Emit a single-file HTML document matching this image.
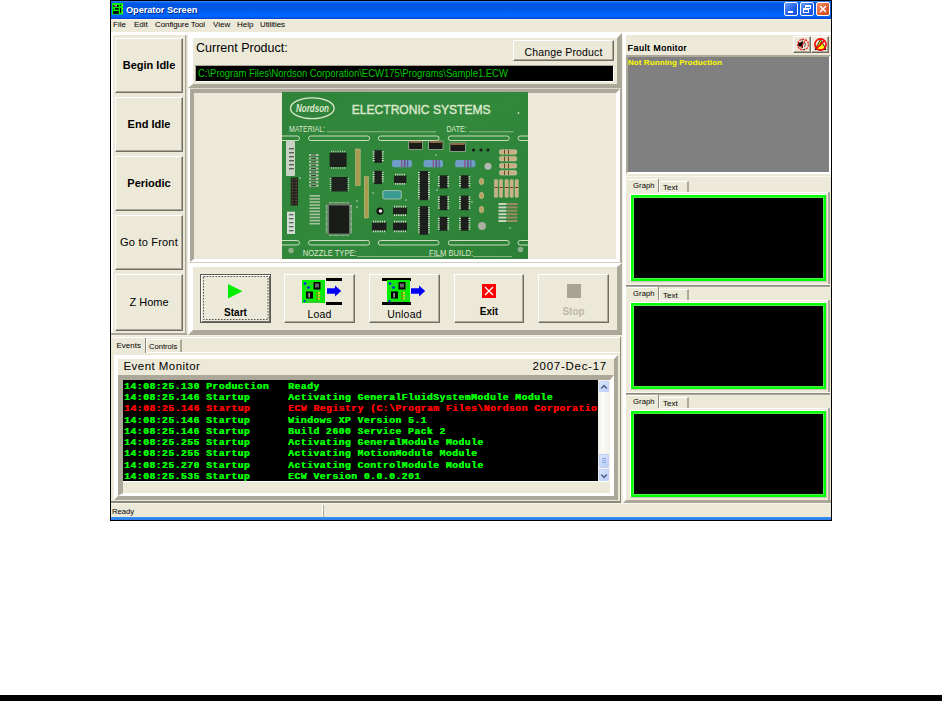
<!DOCTYPE html>
<html><head><meta charset="utf-8">
<style>
*{margin:0;padding:0;box-sizing:border-box}
html,body{width:942px;height:701px;background:#fff;overflow:hidden;position:relative;font-family:"Liberation Sans",sans-serif}
.a{position:absolute}
.bg{background:#ece9d8}
.t{position:absolute;white-space:pre;line-height:1}
.btn{position:absolute;background:#ece9d8;border-top:1px solid #fff;border-left:1px solid #fff;border-right:1px solid #716f64;border-bottom:1px solid #716f64;box-shadow:inset -1px -1px 0 #aca899}
.mono{font-family:"Liberation Mono",monospace;font-weight:bold}
</style></head><body>

<!-- bottom black bar -->
<div class="a" style="left:0;top:695px;width:942px;height:6px;background:#000"></div>

<!-- window frame -->
<div class="a" style="left:110px;top:0;width:722px;height:521px;background:#000"></div>
<div class="a bg" style="left:111px;top:1px;width:720px;height:519px"></div>
<!-- title bar -->
<div class="a" style="left:111px;top:1px;width:720px;height:18px;background:linear-gradient(#3a8cff 0px,#1a6cf5 1px,#0058e6 2px,#0055e0 6px,#005cec 10px,#0066ff 13px,#0063fb 16px,#0050e8 17px,#0040cc 18px)"></div>
<!-- icon -->
<svg class="a" style="left:112px;top:3px" width="12" height="12" viewBox="0 0 12 12">
<rect x="0" y="0" width="11" height="11.5" fill="#00f000"/>
<rect x="1.2" y="1.9" width="5.6" height="2" rx="0.5" fill="#000"/><rect x="2.2" y="2.4" width="2.8" height="0.9" fill="#fff"/>
<rect x="3" y="5" width="3.8" height="1.7" fill="#000"/><circle cx="1.5" cy="6.5" r="0.6" fill="#000"/>
<rect x="1.2" y="8" width="5.6" height="2.8" fill="#000"/>
<rect x="8" y="4.9" width="1.1" height="4.9" fill="#000"/><circle cx="8.5" cy="2.3" r="0.7" fill="#000"/>
<circle cx="10.5" cy="2.4" r="0.6" fill="#f0f000"/><circle cx="10.5" cy="5.5" r="0.6" fill="#f0f000"/><circle cx="10.5" cy="9.4" r="0.6" fill="#f0f000"/>
</svg>
<div class="t" style="left:126px;top:5.5px;font-size:9.2px;font-weight:bold;color:#fff;letter-spacing:-0.05px;text-shadow:1px 1px 0 #0a2a8a">Operator Screen</div>
<!-- window buttons -->
<div class="a" style="left:784px;top:2px;width:14px;height:14px;border:1px solid #fff;border-radius:2px;background:linear-gradient(135deg,#6aa0ff,#1f5ee8 60%,#1a50d8)">
  <div class="a" style="left:3px;top:8px;width:5px;height:2px;background:#fff"></div>
</div>
<div class="a" style="left:800px;top:2px;width:14px;height:14px;border:1px solid #fff;border-radius:2px;background:linear-gradient(135deg,#6aa0ff,#1f5ee8 60%,#1a50d8)">
  <div class="a" style="left:4px;top:2px;width:6px;height:4px;border:1px solid #fff;border-top-width:2px"></div>
  <div class="a" style="left:2px;top:5px;width:6px;height:5px;border:1px solid #fff;border-top-width:2px;background:#2a66ea"></div>
</div>
<div class="a" style="left:816px;top:2px;width:14px;height:14px;border:1px solid #fff;border-radius:2px;background:linear-gradient(135deg,#f0906a,#e05a30 60%,#c84a20)">
  <svg class="a" style="left:0;top:0" width="12" height="12"><path d="M3 3 L9 9 M9 3 L3 9" stroke="#fff" stroke-width="1.6"/></svg>
</div>

<!-- menu -->
<div class="a" style="left:111px;top:19px;width:720px;height:1px;background:#f8f4e2"></div>
<div class="t" style="left:113px;top:21px;font-size:8px;color:#000">File</div>
<div class="t" style="left:134px;top:21px;font-size:8px;color:#000">Edit</div>
<div class="t" style="left:155px;top:21px;font-size:8px;color:#000;letter-spacing:-0.1px">Configure Tool</div>
<div class="t" style="left:213px;top:21px;font-size:8px;color:#000">View</div>
<div class="t" style="left:237px;top:21px;font-size:8px;color:#000">Help</div>
<div class="t" style="left:260px;top:21px;font-size:8px;color:#000;letter-spacing:-0.1px">Utilities</div>

<!-- client top white line -->
<div class="a" style="left:111px;top:32px;width:720px;height:3px;background:#fff"></div>
<div class="a" style="left:111px;top:32px;width:2px;height:305px;background:#fff"></div>

<!-- LEFT COLUMN -->
<div class="a" style="left:185px;top:35px;width:1px;height:300px;background:#aca899"></div>
<div class="a" style="left:186px;top:35px;width:1px;height:300px;background:#d8d4c4"></div>
<div class="a" style="left:111px;top:333px;width:76px;height:2px;background:#aca899"></div>
<div class="a" style="left:111px;top:335px;width:510px;height:1px;background:#f4f1e4"></div>
<div class="btn" style="left:115px;top:38px;width:68px;height:55px"><div class="t" style="left:0;width:66px;text-align:center;top:20.6px;font-size:11px;font-weight:bold;color:#000">Begin Idle</div></div>
<div class="btn" style="left:115px;top:97px;width:68px;height:55px"><div class="t" style="left:0;width:66px;text-align:center;top:20.6px;font-size:11px;font-weight:bold;color:#000">End Idle</div></div>
<div class="btn" style="left:115px;top:156px;width:68px;height:55px"><div class="t" style="left:0;width:66px;text-align:center;top:20.6px;font-size:11px;font-weight:bold;color:#000">Periodic</div></div>
<div class="btn" style="left:115px;top:215px;width:68px;height:55px"><div class="t" style="left:0;width:66px;text-align:center;top:21px;font-size:11px;letter-spacing:0.2px;color:#000">Go to Front</div></div>
<div class="btn" style="left:115px;top:274px;width:68px;height:57px"><div class="t" style="left:0;width:66px;text-align:center;top:22px;font-size:11px;color:#000">Z Home</div></div>


<!-- MIDDLE -->
<!-- product panel -->
<div class="a" style="left:188px;top:33px;width:434px;height:55px;background:#ece9d8;border-style:solid;border-width:5px 5px 4px 5px;border-color:#fff #aca899 #aca899 #fff"></div>
<div class="t" style="left:196px;top:42px;font-size:12.5px;color:#000">Current Product:</div>
<div class="btn" style="left:513px;top:40px;width:101px;height:21px"><div class="t" style="left:0;width:99px;text-align:center;top:6px;font-size:10.5px;color:#000;letter-spacing:0.15px">Change Product</div></div>
<div class="a" style="left:195px;top:65px;width:419px;height:17px;background:#000;border-top:1px solid #aca899;border-left:1px solid #aca899;border-bottom:1px solid #fff;border-right:1px solid #fff"></div>
<div class="t" style="left:198px;top:68px;font-size:10.6px;color:#00c800;transform:scaleX(0.892);transform-origin:0 0">C:\Program Files\Nordson Corporation\ECW175\Programs\Sample1.ECW</div>
<!-- image panel -->
<div class="a" style="left:188px;top:88px;width:434px;height:175px;background:#ece9d8;border-style:solid;border-width:1px 2px 1px 2px;border-color:#dcd9cc #aca899 #d0cdc0 #fff"></div>
<div class="a" style="left:190px;top:89px;width:430px;height:173px;border-style:solid;border-width:4px 4px 3px 4px;border-color:#aca899 #fff #fff #aca899"></div>
<svg class="a" style="left:282px;top:92px" width="246" height="167" viewBox="282 92 246 167">
<defs><linearGradient id="pg" x1="0" y1="0" x2="1" y2="1"><stop offset="0" stop-color="#2f843a"/><stop offset="0.5" stop-color="#31883b"/><stop offset="1" stop-color="#2c8037"/></linearGradient></defs>
<rect x="282" y="92" width="246" height="167" fill="url(#pg)"/>
<ellipse cx="312.3" cy="108.2" rx="21.8" ry="10.4" fill="none" stroke="#dce8cc" stroke-width="1.3"/>
<text x="312.5" y="112" font-family="Liberation Sans" font-style="italic" font-weight="bold" font-size="10.5" fill="#dce8cc" text-anchor="middle" textLength="33" lengthAdjust="spacingAndGlyphs">Nordson</text>
<text x="351.7" y="113.9" font-family="Liberation Sans" font-size="13.4" fill="#dce8cc" stroke="#dce8cc" stroke-width="0.45" textLength="139" lengthAdjust="spacingAndGlyphs">ELECTRONIC SYSTEMS</text>
<text x="289" y="131.8" font-family="Liberation Sans" font-size="8.2" fill="#dce8cc" textLength="36" lengthAdjust="spacingAndGlyphs">MATERIAL:</text>
<text x="446.5" y="131.8" font-family="Liberation Sans" font-size="8.2" fill="#dce8cc" textLength="20" lengthAdjust="spacingAndGlyphs">DATE:</text>
<path d="M327 131.8 H436 M469 131.8 H513.6 M357 256.6 H443 M473 256.6 H512" stroke="#dce8cc" stroke-width="0.7" opacity="0.8"/>
<text x="302.7" y="256.2" font-family="Liberation Sans" font-size="8.6" fill="#dce8cc" textLength="54" lengthAdjust="spacingAndGlyphs">NOZZLE TYPE:</text>
<text x="429" y="256.2" font-family="Liberation Sans" font-size="8.6" fill="#dce8cc" textLength="44" lengthAdjust="spacingAndGlyphs">FILM BUILD:</text>
<rect x="276" y="136" width="23.5" height="4.5" rx="2.25" fill="none" stroke="#dce8cc" stroke-width="0.9"/>
<rect x="308.5" y="136" width="61.19999999999999" height="4.5" rx="2.25" fill="none" stroke="#dce8cc" stroke-width="0.9"/>
<rect x="378.3" y="136" width="60.69999999999999" height="4.5" rx="2.25" fill="none" stroke="#dce8cc" stroke-width="0.9"/>
<rect x="448.3" y="136" width="61.0" height="4.5" rx="2.25" fill="none" stroke="#dce8cc" stroke-width="0.9"/>
<rect x="518" y="136" width="16" height="4.5" rx="2.25" fill="none" stroke="#dce8cc" stroke-width="0.9"/>
<rect x="276" y="240.5" width="23.5" height="4.5" rx="2.25" fill="none" stroke="#dce8cc" stroke-width="0.9"/>
<rect x="308.5" y="240.5" width="61.19999999999999" height="4.5" rx="2.25" fill="none" stroke="#dce8cc" stroke-width="0.9"/>
<rect x="378.3" y="240.5" width="60.69999999999999" height="4.5" rx="2.25" fill="none" stroke="#dce8cc" stroke-width="0.9"/>
<rect x="448.3" y="240.5" width="61.0" height="4.5" rx="2.25" fill="none" stroke="#dce8cc" stroke-width="0.9"/>
<rect x="518" y="240.5" width="16" height="4.5" rx="2.25" fill="none" stroke="#dce8cc" stroke-width="0.9"/>
<circle cx="291" cy="250.5" r="2.7" fill="#8cb088"/><circle cx="520.5" cy="249.5" r="2.8" fill="#8cb088"/>
<rect x="286" y="141" width="9" height="35" rx="1" fill="#c9d3c3"/>
<rect x="289" y="148" width="5" height="1.4" fill="#55605a"/>
<rect x="289" y="152" width="5" height="1.4" fill="#55605a"/>
<rect x="289" y="156" width="5" height="1.4" fill="#55605a"/>
<rect x="289" y="160" width="5" height="1.4" fill="#55605a"/>
<rect x="289" y="164" width="5" height="1.4" fill="#55605a"/>
<rect x="289" y="168" width="5" height="1.4" fill="#55605a"/>
<rect x="287" y="211.7" width="8" height="22.3" fill="#d3ddd3"/>
<rect x="289" y="214" width="4.5" height="1.3" fill="#5a665e"/>
<rect x="289" y="218" width="4.5" height="1.3" fill="#5a665e"/>
<rect x="289" y="222" width="4.5" height="1.3" fill="#5a665e"/>
<rect x="289" y="226" width="4.5" height="1.3" fill="#5a665e"/>
<rect x="289" y="230" width="4.5" height="1.3" fill="#5a665e"/>
<rect x="290.7" y="177.6" width="7.3" height="28" fill="#26261e"/>
<rect x="291.8" y="179" width="1.4" height="1.2" fill="#6a5040"/><rect x="295.5" y="179" width="1.4" height="1.2" fill="#6a5040"/>
<rect x="291.8" y="182" width="1.4" height="1.2" fill="#6a5040"/><rect x="295.5" y="182" width="1.4" height="1.2" fill="#6a5040"/>
<rect x="291.8" y="185" width="1.4" height="1.2" fill="#6a5040"/><rect x="295.5" y="185" width="1.4" height="1.2" fill="#6a5040"/>
<rect x="291.8" y="188" width="1.4" height="1.2" fill="#6a5040"/><rect x="295.5" y="188" width="1.4" height="1.2" fill="#6a5040"/>
<rect x="291.8" y="191" width="1.4" height="1.2" fill="#6a5040"/><rect x="295.5" y="191" width="1.4" height="1.2" fill="#6a5040"/>
<rect x="291.8" y="194" width="1.4" height="1.2" fill="#6a5040"/><rect x="295.5" y="194" width="1.4" height="1.2" fill="#6a5040"/>
<rect x="291.8" y="197" width="1.4" height="1.2" fill="#6a5040"/><rect x="295.5" y="197" width="1.4" height="1.2" fill="#6a5040"/>
<rect x="291.8" y="200" width="1.4" height="1.2" fill="#6a5040"/><rect x="295.5" y="200" width="1.4" height="1.2" fill="#6a5040"/>
<rect x="291.8" y="203" width="1.4" height="1.2" fill="#6a5040"/><rect x="295.5" y="203" width="1.4" height="1.2" fill="#6a5040"/>
<rect x="309.2" y="154.0" width="9.3" height="2" fill="#b8c8b0"/><rect x="311" y="154.5" width="5" height="1" fill="#2a3a2a"/>
<rect x="309.2" y="157.4" width="9.3" height="2" fill="#b8c8b0"/><rect x="311" y="157.9" width="5" height="1" fill="#2a3a2a"/>
<rect x="309.2" y="160.8" width="9.3" height="2" fill="#b8c8b0"/><rect x="311" y="161.3" width="5" height="1" fill="#2a3a2a"/>
<rect x="309.2" y="164.2" width="9.3" height="2" fill="#b8c8b0"/><rect x="311" y="164.7" width="5" height="1" fill="#2a3a2a"/>
<rect x="309.2" y="167.6" width="9.3" height="2" fill="#b8c8b0"/><rect x="311" y="168.1" width="5" height="1" fill="#2a3a2a"/>
<rect x="309.2" y="171.0" width="9.3" height="2" fill="#b8c8b0"/><rect x="311" y="171.5" width="5" height="1" fill="#2a3a2a"/>
<rect x="309.2" y="174.4" width="9.3" height="2" fill="#b8c8b0"/><rect x="311" y="174.9" width="5" height="1" fill="#2a3a2a"/>
<rect x="309.2" y="177.8" width="9.3" height="2" fill="#b8c8b0"/><rect x="311" y="178.3" width="5" height="1" fill="#2a3a2a"/>
<rect x="309.2" y="181.2" width="9.3" height="2" fill="#b8c8b0"/><rect x="311" y="181.7" width="5" height="1" fill="#2a3a2a"/>
<rect x="309.2" y="184.6" width="9.3" height="2" fill="#b8c8b0"/><rect x="311" y="185.1" width="5" height="1" fill="#2a3a2a"/>
<rect x="309.5" y="195.0" width="10.5" height="1.6" fill="#a8c0a0"/>
<rect x="309.5" y="198.1" width="10.5" height="1.6" fill="#a8c0a0"/>
<rect x="309.5" y="201.2" width="10.5" height="1.6" fill="#a8c0a0"/>
<rect x="309.5" y="204.3" width="10.5" height="1.6" fill="#a8c0a0"/>
<rect x="309.5" y="207.4" width="10.5" height="1.6" fill="#a8c0a0"/>
<rect x="309.5" y="210.5" width="10.5" height="1.6" fill="#a8c0a0"/>
<rect x="309.5" y="213.6" width="10.5" height="1.6" fill="#a8c0a0"/>
<rect x="309.5" y="216.7" width="10.5" height="1.6" fill="#a8c0a0"/>
<rect x="309.5" y="219.8" width="10.5" height="1.6" fill="#a8c0a0"/>
<rect x="309.5" y="222.9" width="10.5" height="1.6" fill="#a8c0a0"/>
<rect x="329.6" y="152.6" width="17" height="14.4" fill="#1c201c"/>
<path d="M331 151.5 H345.5 M331 168 H345.5" stroke="#c8d0c0" stroke-width="1.4" stroke-dasharray="1 1.2"/>
<rect x="331.5" y="177" width="16" height="14.5" fill="#1e221e"/>
<path d="M330.5 178 V190.5 M348.5 178 V190.5" stroke="#c8d0c0" stroke-width="1.3" stroke-dasharray="1 1"/>
<rect x="327.5" y="203.5" width="23" height="31" fill="#6a7a68"/><path d="M326.6 205 V233.5 M351.2 205 V233.5" stroke="#b8c4b0" stroke-width="1.6" stroke-dasharray="0.7 0.5"/><path d="M329 202.6 H349 M329 235.4 H349" stroke="#b8c4b0" stroke-width="1.4" stroke-dasharray="0.7 0.5"/><rect x="329" y="205.5" width="20" height="28" fill="#1a1c1a"/>
<rect x="355.5" y="149" width="4.7" height="36.5" fill="#a89c50" stroke="#d0c890" stroke-width="0.5"/>
<rect x="364.3" y="176.7" width="4.1" height="41.3" fill="#a89c50" stroke="#d0c890" stroke-width="0.5"/>
<rect x="374.2" y="150.3" width="7.900000000000011" height="12.5" fill="#1c1f1c"/><path d="M373.6 151.3 V161.8 M382.7 151.3 V161.8" stroke="#dde4d4" stroke-width="1.8" stroke-dasharray="1.1 1.1"/>
<rect x="374.2" y="170.7" width="7.900000000000011" height="13.400000000000006" fill="#1c1f1c"/><path d="M373.6 171.7 V183.1 M382.7 171.7 V183.1" stroke="#dde4d4" stroke-width="1.8" stroke-dasharray="1.1 1.1"/>
<rect x="439.4" y="175.3" width="8.200000000000022" height="13.099999999999994" fill="#1c1f1c"/><path d="M438.8 176.3 V187.4 M448.2 176.3 V187.4" stroke="#dde4d4" stroke-width="1.8" stroke-dasharray="1.1 1.1"/>
<rect x="439.4" y="195.6" width="8.200000000000022" height="14.599999999999994" fill="#1c1f1c"/><path d="M438.8 196.6 V209.2 M448.2 196.6 V209.2" stroke="#dde4d4" stroke-width="1.8" stroke-dasharray="1.1 1.1"/>
<rect x="439.4" y="216.8" width="8.200000000000022" height="13.899999999999977" fill="#1c1f1c"/><path d="M438.8 217.8 V229.7 M448.2 217.8 V229.7" stroke="#dde4d4" stroke-width="1.8" stroke-dasharray="1.1 1.1"/>
<rect x="460.59999999999997" y="175.3" width="8.200000000000022" height="13.099999999999994" fill="#1c1f1c"/><path d="M460.0 176.3 V187.4 M469.4 176.3 V187.4" stroke="#dde4d4" stroke-width="1.8" stroke-dasharray="1.1 1.1"/>
<rect x="460.59999999999997" y="195.6" width="8.200000000000022" height="14.599999999999994" fill="#1c1f1c"/><path d="M460.0 196.6 V209.2 M469.4 196.6 V209.2" stroke="#dde4d4" stroke-width="1.8" stroke-dasharray="1.1 1.1"/>
<rect x="460.59999999999997" y="216.8" width="8.200000000000022" height="13.899999999999977" fill="#1c1f1c"/><path d="M460.0 217.8 V229.7 M469.4 217.8 V229.7" stroke="#dde4d4" stroke-width="1.8" stroke-dasharray="1.1 1.1"/>
<rect x="394" y="175.5" width="12.399999999999977" height="7.599999999999994" fill="#1c1f1c"/><path d="M395 174.7 H405.4 M395 183.9 H405.4" stroke="#dde4d4" stroke-width="1.8" stroke-dasharray="1.1 1.1"/>
<rect x="393" y="207.5" width="14" height="6.900000000000006" fill="#1c1f1c"/><path d="M394 206.7 H406 M394 215.20000000000002 H406" stroke="#dde4d4" stroke-width="1.8" stroke-dasharray="1.1 1.1"/>
<rect x="372" y="222.5" width="14.5" height="8" fill="#1c1f1c"/><path d="M373 221.7 H385.5 M373 231.3 H385.5" stroke="#dde4d4" stroke-width="1.8" stroke-dasharray="1.1 1.1"/>
<rect x="393" y="222.5" width="14" height="8" fill="#1c1f1c"/><path d="M394 221.7 H406 M394 231.3 H406" stroke="#dde4d4" stroke-width="1.8" stroke-dasharray="1.1 1.1"/>
<rect x="419.5" y="171" width="8.799999999999988" height="29.19999999999999" fill="#1c1f1c"/><path d="M418.90000000000003 172 V199.2 M428.9 172 V199.2" stroke="#dde4d4" stroke-width="1.8" stroke-dasharray="1.1 1.1"/>
<rect x="419.5" y="206.2" width="8.799999999999988" height="28.5" fill="#1c1f1c"/><path d="M418.90000000000003 207.2 V233.7 M428.9 207.2 V233.7" stroke="#dde4d4" stroke-width="1.8" stroke-dasharray="1.1 1.1"/>
<rect x="392" y="160" width="20" height="7.3" rx="2" fill="#6f9dc6"/>
<rect x="401" y="160" width="1.5" height="7.3" fill="#8a5a8a"/><rect x="404" y="160" width="1.5" height="7.3" fill="#6a4a7a"/><rect x="407" y="160" width="1.2" height="7.3" fill="#5a5a8a"/>
<rect x="423.6" y="160" width="19.399999999999977" height="7.3" rx="2" fill="#6f9dc6"/>
<rect x="432.6" y="160" width="1.5" height="7.3" fill="#8a5a8a"/><rect x="435.6" y="160" width="1.5" height="7.3" fill="#6a4a7a"/><rect x="438.6" y="160" width="1.2" height="7.3" fill="#5a5a8a"/>
<rect x="455.2" y="160" width="20.100000000000023" height="7.3" rx="2" fill="#6f9dc6"/>
<rect x="464.2" y="160" width="1.5" height="7.3" fill="#8a5a8a"/><rect x="467.2" y="160" width="1.5" height="7.3" fill="#6a4a7a"/><rect x="470.2" y="160" width="1.2" height="7.3" fill="#5a5a8a"/>
<rect x="408.8" y="141" width="13.899999999999977" height="8.5" fill="#1a1a16" stroke="#c8d0c0" stroke-width="0.6"/><rect x="409.8" y="141" width="11.899999999999977" height="2" fill="#8a6a40"/>
<rect x="428.7" y="141" width="14.300000000000011" height="8.5" fill="#1a1a16" stroke="#c8d0c0" stroke-width="0.6"/><rect x="429.7" y="141" width="12.300000000000011" height="2" fill="#8a6a40"/>
<rect x="450" y="143" width="15.300000000000011" height="8.5" fill="#1a1a16" stroke="#c8d0c0" stroke-width="0.6"/><rect x="451" y="143" width="13.300000000000011" height="2" fill="#8a6a40"/>
<rect x="382.8" y="190.6" width="18.5" height="8.4" rx="1.5" fill="#3a9a90" stroke="#c8d8c8" stroke-width="0.7"/>
<circle cx="380" cy="211.2" r="3.6" fill="#141414"/><circle cx="380.5" cy="211" r="1.8" fill="#e8e8e0"/>
<ellipse cx="481.5" cy="181.5" rx="2.2" ry="3.3" fill="#b8a060" stroke="#d8d0a8" stroke-width="0.5"/>
<ellipse cx="481.5" cy="195.5" rx="2.2" ry="3.3" fill="#b8a060" stroke="#d8d0a8" stroke-width="0.5"/>
<ellipse cx="481.5" cy="209.5" rx="2.2" ry="3.3" fill="#b8a060" stroke="#d8d0a8" stroke-width="0.5"/>
<circle cx="488" cy="166.3" r="3.5" fill="#b0b8b0"/>
<circle cx="482" cy="226" r="4" fill="#a8b0a0"/>
<rect x="499.5" y="149.7" width="17.2" height="4.6" rx="1.5" fill="#c8b080" stroke="#d8d8c0" stroke-width="0.5"/><rect x="504" y="149.7" width="1" height="4.6" fill="#6a4a2a"/><rect x="508" y="149.7" width="1" height="4.6" fill="#6a4a2a"/>
<rect x="499.5" y="156.39999999999998" width="17.2" height="4.6" rx="1.5" fill="#c8b080" stroke="#d8d8c0" stroke-width="0.5"/><rect x="504" y="156.39999999999998" width="1" height="4.6" fill="#6a4a2a"/><rect x="508" y="156.39999999999998" width="1" height="4.6" fill="#6a4a2a"/>
<rect x="499.5" y="163.5" width="17.2" height="4.6" rx="1.5" fill="#c8b080" stroke="#d8d8c0" stroke-width="0.5"/><rect x="504" y="163.5" width="1" height="4.6" fill="#6a4a2a"/><rect x="508" y="163.5" width="1" height="4.6" fill="#6a4a2a"/>
<rect x="499.5" y="170.5" width="17.2" height="4.6" rx="1.5" fill="#c8b080" stroke="#d8d8c0" stroke-width="0.5"/><rect x="504" y="170.5" width="1" height="4.6" fill="#6a4a2a"/><rect x="508" y="170.5" width="1" height="4.6" fill="#6a4a2a"/>
<rect x="494.3" y="179.4" width="3.4" height="18" rx="1" fill="#c8b080" stroke="#d0d0b0" stroke-width="0.4"/><rect x="494.3" y="187" width="3.4" height="1" fill="#7a3a20"/>
<rect x="499.3" y="179.4" width="3.4" height="18" rx="1" fill="#c8b080" stroke="#d0d0b0" stroke-width="0.4"/><rect x="499.3" y="187" width="3.4" height="1" fill="#7a3a20"/>
<rect x="504.90000000000003" y="179.4" width="3.4" height="18" rx="1" fill="#c8b080" stroke="#d0d0b0" stroke-width="0.4"/><rect x="504.90000000000003" y="187" width="3.4" height="1" fill="#7a3a20"/>
<rect x="509.90000000000003" y="179.4" width="3.4" height="18" rx="1" fill="#c8b080" stroke="#d0d0b0" stroke-width="0.4"/><rect x="509.90000000000003" y="187" width="3.4" height="1" fill="#7a3a20"/>
<rect x="515.0" y="179.4" width="3.4" height="18" rx="1" fill="#c8b080" stroke="#d0d0b0" stroke-width="0.4"/><rect x="515.0" y="187" width="3.4" height="1" fill="#7a3a20"/>
<rect x="498.5" y="203.0" width="8" height="2" fill="#c8d4c0"/><rect x="507" y="203.0" width="10.5" height="2" fill="#9a8a60"/>
<rect x="498.5" y="206.4" width="8" height="2" fill="#c8d4c0"/><rect x="507" y="206.4" width="10.5" height="2" fill="#9a8a60"/>
<rect x="498.5" y="209.8" width="8" height="2" fill="#c8d4c0"/><rect x="507" y="209.8" width="10.5" height="2" fill="#9a8a60"/>
<rect x="498.5" y="213.2" width="8" height="2" fill="#c8d4c0"/><rect x="507" y="213.2" width="10.5" height="2" fill="#9a8a60"/>
<rect x="498.5" y="216.6" width="8" height="2" fill="#c8d4c0"/><rect x="507" y="216.6" width="10.5" height="2" fill="#9a8a60"/>
<rect x="498.5" y="220.0" width="8" height="2" fill="#c8d4c0"/><rect x="507" y="220.0" width="10.5" height="2" fill="#9a8a60"/>
<circle cx="473.5" cy="150" r="1.6" fill="#1a1a1a"/>
<circle cx="481" cy="150" r="1.6" fill="#1a1a1a"/>
<circle cx="488" cy="150" r="1.6" fill="#1a1a1a"/>
<circle cx="357" cy="201" r="0.8" fill="#c8d8c0"/>
<circle cx="357" cy="207" r="0.8" fill="#c8d8c0"/>
<circle cx="373" cy="193" r="0.8" fill="#c8d8c0"/>
<circle cx="406" cy="200" r="0.8" fill="#c8d8c0"/>
<circle cx="436" cy="155" r="0.8" fill="#c8d8c0"/>
<circle cx="472" cy="202" r="0.8" fill="#c8d8c0"/>
<circle cx="510" cy="228" r="0.8" fill="#c8d8c0"/>
<circle cx="518.5" cy="113" r="0.9" fill="#c8d8c0"/>
<circle cx="437" cy="190" r="0.8" fill="#c8d8c0"/>
<circle cx="300" cy="178" r="0.8" fill="#c8d8c0"/>
</svg>
<!-- buttons panel -->
<div class="a" style="left:188px;top:263px;width:434px;height:72px;background:#ece9d8;border-style:solid;border-width:4px 5px 5px 5px;border-color:#fff #aca899 #aca899 #fff"></div>


<!-- RIGHT COLUMN -->
<div class="a" style="left:622px;top:35px;width:1px;height:469px;background:#f4f2e6"></div>
<div class="a" style="left:623px;top:33px;width:3px;height:471px;background:#fff"></div>
<div class="t" style="left:627.5px;top:44px;font-size:8.8px;color:#000;letter-spacing:0.62px;text-shadow:0.3px 0 0 #000">Fault Monitor</div>
<div class="btn" style="left:793px;top:36px;width:18px;height:17px"></div>
<div class="btn" style="left:811px;top:36px;width:18px;height:17px"></div>
<svg class="a" style="left:796px;top:38px" width="14" height="14" viewBox="0 0 14 14">
 <path d="M2.2 4.6 H4.6 L6.8 2.6 V10.4 L4.6 8.4 H2.2 Z" fill="#000"/>
 <path d="M8.6 4.2 Q10 6.5 8.6 8.8" stroke="#333" stroke-width="0.9" fill="none"/>
 <circle cx="7" cy="6.6" r="5.4" stroke="#ff1010" stroke-width="1.2" fill="none" stroke-dasharray="2 1"/>
 <path d="M9.2 2.2 L4.6 10.6" stroke="#ff1010" stroke-width="1"/>
 <circle cx="6" cy="1.8" r="0.6" fill="#000"/><circle cx="8.2" cy="11.4" r="0.7" fill="#000"/>
</svg>
<svg class="a" style="left:813px;top:37px" width="15" height="15" viewBox="0 0 15 15">
 <path d="M7.5 2.5 L13 12.5 H2 Z" fill="#ffff00" stroke="#000" stroke-width="0.8"/>
 <path d="M7.5 5.5 V9" stroke="#000" stroke-width="1.2"/>
 <circle cx="7.5" cy="7.5" r="5.6" stroke="#ff0000" stroke-width="1.6" fill="none"/>
 <path d="M11.4 3.6 L3.6 11.4" stroke="#ff0000" stroke-width="1.6"/>
</svg>
<div class="a" style="left:626px;top:55px;width:205px;height:119px;background:#808080;border-style:solid;border-width:2px 2px 2px 2px;border-color:#aca899 #fff #fff #aca899"></div>
<div class="t" style="left:628px;top:59px;font-size:8px;font-weight:bold;color:#ffff00;letter-spacing:0.08px">Not Running Production</div>
<!-- graph 0 -->
<div class="a" style="left:626px;top:176px;width:205px;height:1px;background:#f8f6ee"></div>
<div class="a" style="left:627px;top:179px;width:31px;height:13px;background:#ece9d8;border-top:1px solid #fff"></div>
<div class="a" style="left:658px;top:179px;width:1px;height:13px;background:#8c8a7c"></div>
<div class="t" style="left:633px;top:182px;font-size:7.6px;color:#000;letter-spacing:0.1px">Graph</div>
<div class="a" style="left:659px;top:181px;width:30px;height:11px;border-top:1px solid #fff;border-left:1px solid #fff;border-right:2px solid #aca899"></div>
<div class="t" style="left:663px;top:184px;font-size:8px;color:#000">Text</div>
<div class="a" style="left:659px;top:192px;width:170px;height:1px;background:#fff"></div>
<div class="a" style="left:828px;top:192px;width:2px;height:92px;background:#aca899"></div>
<div class="a" style="left:630px;top:194px;width:197px;height:88px;border-style:solid;border-width:1px;border-color:#fff #d0c0c0 #d0c0c0 #fff"></div>
<div class="a" style="left:631px;top:195px;width:195px;height:86px;background:#000;border:2px solid #00ff00"></div>
<div class="a" style="left:633px;top:197px;width:191px;height:82px;border:1px solid #50f050"></div>
<div class="a" style="left:626px;top:284px;width:204px;height:3px;background:#8e8c7e;border-bottom:1px solid #aca899"></div>
<!-- graph 1 -->
<div class="a" style="left:626px;top:284px;width:205px;height:1px;background:#f8f6ee"></div>
<div class="a" style="left:627px;top:287px;width:31px;height:13px;background:#ece9d8;border-top:1px solid #fff"></div>
<div class="a" style="left:658px;top:287px;width:1px;height:13px;background:#8c8a7c"></div>
<div class="t" style="left:633px;top:290px;font-size:7.6px;color:#000;letter-spacing:0.1px">Graph</div>
<div class="a" style="left:659px;top:289px;width:30px;height:11px;border-top:1px solid #fff;border-left:1px solid #fff;border-right:2px solid #aca899"></div>
<div class="t" style="left:663px;top:292px;font-size:8px;color:#000">Text</div>
<div class="a" style="left:659px;top:300px;width:170px;height:1px;background:#fff"></div>
<div class="a" style="left:828px;top:300px;width:2px;height:92px;background:#aca899"></div>
<div class="a" style="left:630px;top:302px;width:197px;height:88px;border-style:solid;border-width:1px;border-color:#fff #d0c0c0 #d0c0c0 #fff"></div>
<div class="a" style="left:631px;top:303px;width:195px;height:86px;background:#000;border:2px solid #00ff00"></div>
<div class="a" style="left:633px;top:305px;width:191px;height:82px;border:1px solid #50f050"></div>
<div class="a" style="left:626px;top:392px;width:204px;height:3px;background:#8e8c7e;border-bottom:1px solid #aca899"></div>
<!-- graph 2 -->
<div class="a" style="left:626px;top:392px;width:205px;height:1px;background:#f8f6ee"></div>
<div class="a" style="left:627px;top:395px;width:31px;height:13px;background:#ece9d8;border-top:1px solid #fff"></div>
<div class="a" style="left:658px;top:395px;width:1px;height:13px;background:#8c8a7c"></div>
<div class="t" style="left:633px;top:398px;font-size:7.6px;color:#000;letter-spacing:0.1px">Graph</div>
<div class="a" style="left:659px;top:397px;width:30px;height:11px;border-top:1px solid #fff;border-left:1px solid #fff;border-right:2px solid #aca899"></div>
<div class="t" style="left:663px;top:400px;font-size:8px;color:#000">Text</div>
<div class="a" style="left:659px;top:408px;width:170px;height:1px;background:#fff"></div>
<div class="a" style="left:828px;top:408px;width:2px;height:92px;background:#aca899"></div>
<div class="a" style="left:630px;top:410px;width:197px;height:88px;border-style:solid;border-width:1px;border-color:#fff #d0c0c0 #d0c0c0 #fff"></div>
<div class="a" style="left:631px;top:411px;width:195px;height:86px;background:#000;border:2px solid #00ff00"></div>
<div class="a" style="left:633px;top:413px;width:191px;height:82px;border:1px solid #50f050"></div>
<div class="a" style="left:626px;top:500px;width:205px;height:4px;background:#aca899"></div>
<svg class="a" style="left:622px;top:500px" width="6" height="4"><path d="M4 0 H6 V4 H0 Z" fill="#aca899"/></svg>
<!-- buttons -->
<div class="a" style="left:200px;top:274px;width:71px;height:49px;background:#ece9d8;border:1px solid #5a5850;box-shadow:inset 1px 1px 0 #fff,inset -1px -1px 0 #716f64"></div>
<svg class="a" style="left:200px;top:274px" width="71" height="49"><rect x="3.5" y="2.5" width="64.5" height="43" fill="none" stroke="#555" stroke-width="1" stroke-dasharray="1.6 1.4"/></svg>
<svg class="a" style="left:228px;top:284px" width="15" height="15"><path d="M0 0 L14.5 7.3 L0 14.6 Z" fill="#00ee00"/></svg>
<div class="t" style="left:200px;width:71px;text-align:center;top:307.5px;font-size:10px;font-weight:bold;color:#000">Start</div>

<div class="btn" style="left:284px;top:274px;width:71px;height:49px"></div>
<svg class="a" style="left:302px;top:280px" width="23" height="23" viewBox="0 0 23 23">
<rect x="0" y="0" width="23" height="23" fill="#00f000"/>
<path d="M4 2 V11 M6 4 H11 M4 13 H9 M17 9 V21 M6 16 V22 H18 M20 2 V8 M15 16 H21 V20" stroke="#a08890" stroke-width="0.6" fill="none"/>
<rect x="11.5" y="2" width="7" height="7.5" fill="#000"/><rect x="13.5" y="3.5" width="1" height="4" fill="#ccc"/><rect x="15.5" y="3.5" width="1" height="4" fill="#ccc"/>
<rect x="4" y="11.5" width="7" height="7" fill="#000"/><rect x="6.5" y="13" width="1.2" height="4.5" fill="#ddd"/>
<circle cx="3" cy="3.5" r="1.3" fill="#0010ff"/><circle cx="6.5" cy="7.5" r="1.3" fill="#0010ff"/><circle cx="2.5" cy="21" r="1.1" fill="#0010ff"/>
<g fill="#ffee00"><circle cx="17" cy="13" r="0.9"/><circle cx="17" cy="15.8" r="0.9"/><circle cx="17" cy="18.6" r="0.9"/></g>
<g fill="#d04000"><circle cx="15" cy="13" r="0.8"/><circle cx="15" cy="15.8" r="0.8"/><circle cx="15" cy="18.6" r="0.8"/></g>
</svg>
<div class="a" style="left:326px;top:278px;width:16px;height:2.5px;background:#000"></div>
<div class="a" style="left:326px;top:302px;width:16px;height:2.5px;background:#000"></div>
<svg class="a" style="left:327px;top:285px" width="15" height="13"><path d="M0 3.2 H8 V0.5 L14.2 6 L8 11.5 V8.8 H0 Z" fill="#0000f8"/></svg>
<div class="t" style="left:284px;width:71px;text-align:center;top:309px;font-size:10.5px;color:#000;letter-spacing:0.2px">Load</div>

<div class="btn" style="left:369px;top:274px;width:71px;height:49px"></div>
<div class="a" style="left:382px;top:278px;width:29px;height:2.5px;background:#000"></div>
<svg class="a" style="left:387px;top:280px" width="23" height="23" viewBox="0 0 23 23">
<rect x="0" y="0" width="23" height="23" fill="#00f000"/>
<path d="M4 2 V11 M6 4 H11 M4 13 H9 M17 9 V21 M6 16 V22 H18 M20 2 V8 M15 16 H21 V20" stroke="#a08890" stroke-width="0.6" fill="none"/>
<rect x="11.5" y="2" width="7" height="7.5" fill="#000"/><rect x="13.5" y="3.5" width="1" height="4" fill="#ccc"/><rect x="15.5" y="3.5" width="1" height="4" fill="#ccc"/>
<rect x="4" y="11.5" width="7" height="7" fill="#000"/><rect x="6.5" y="13" width="1.2" height="4.5" fill="#ddd"/>
<circle cx="3" cy="3.5" r="1.3" fill="#0010ff"/><circle cx="6.5" cy="7.5" r="1.3" fill="#0010ff"/><circle cx="2.5" cy="21" r="1.1" fill="#0010ff"/>
<g fill="#ffee00"><circle cx="17" cy="13" r="0.9"/><circle cx="17" cy="15.8" r="0.9"/><circle cx="17" cy="18.6" r="0.9"/></g>
<g fill="#d04000"><circle cx="15" cy="13" r="0.8"/><circle cx="15" cy="15.8" r="0.8"/><circle cx="15" cy="18.6" r="0.8"/></g>
</svg>
<div class="a" style="left:382px;top:302px;width:29px;height:2.5px;background:#000"></div>
<svg class="a" style="left:411px;top:285px" width="15" height="13"><path d="M0 3.2 H8 V0.5 L14.2 6 L8 11.5 V8.8 H0 Z" fill="#0000f8"/></svg>
<div class="t" style="left:369px;width:71px;text-align:center;top:309px;font-size:10.5px;color:#000;letter-spacing:0.2px">Unload</div>

<div class="btn" style="left:454px;top:274px;width:70px;height:49px"></div>
<svg class="a" style="left:482px;top:284px" width="14" height="14"><rect width="14" height="14" fill="#ff0000"/><path d="M3 3 L11 11 M11 3 L3 11" stroke="#fff" stroke-width="1.3"/></svg>
<div class="t" style="left:454px;width:70px;text-align:center;top:307px;font-size:10px;font-weight:bold;color:#000">Exit</div>

<div class="btn" style="left:538px;top:274px;width:71px;height:49px"></div>
<div class="a" style="left:567px;top:284px;width:14px;height:14px;background:#a7a493"></div>
<div class="t" style="left:538px;width:71px;text-align:center;top:307px;font-size:10px;font-weight:bold;color:#bcb8a8">Stop</div>


<!-- EVENTS -->
<!-- tabs -->
<div class="a" style="left:113px;top:337px;width:508px;height:1px;background:#fff"></div>
<div class="a" style="left:145px;top:338px;width:1px;height:15px;background:#8c8a7c"></div>
<div class="t" style="left:116.5px;top:341.5px;font-size:8px;color:#000">Events</div>
<div class="a" style="left:146px;top:339px;width:36px;height:14px;background:#ece9d8;border-top:1px solid #fff;border-left:1px solid #fff;border-right:2px solid #aca899"></div>
<div class="t" style="left:149px;top:343px;font-size:7.6px;color:#000">Controls</div>
<div class="a" style="left:146px;top:352px;width:475px;height:1px;background:#fff"></div>
<!-- tabsheet right/bottom -->
<div class="a" style="left:620px;top:337px;width:1px;height:166px;background:#8c8a7c"></div>
<div class="a" style="left:111px;top:501px;width:510px;height:2px;background:#8a887a"></div>
<div class="a" style="left:111px;top:503px;width:720px;height:1px;background:#f8f6ea"></div>
<!-- event monitor panel -->
<div class="a" style="left:114px;top:355px;width:504px;height:145px;background:#ece9d8;border-style:solid;border-width:4px;border-color:#fff #aca899 #aca899 #fff"></div>
<div class="t" style="left:123.5px;top:360.7px;font-size:11.5px;color:#000;letter-spacing:0.45px">Event Monitor</div>
<div class="t" style="left:532.5px;top:361px;font-size:11.5px;color:#000;letter-spacing:0.72px">2007-Dec-17</div>
<div class="a" style="left:118px;top:375px;width:496px;height:121px;border-style:solid;border-width:5px 4px 3px 5px;border-color:#aca899 #fff #fff #aca899"></div>
<div class="a" style="left:123px;top:380px;width:475px;height:101px;background:#000;overflow:hidden">
<div class="t mono" style="left:1px;top:0.80px;font-size:9.7px;letter-spacing:0.495px;line-height:11.27px;text-shadow:0.45px 0 0 currentColor;color:#00ff00">14:08:25.130 Production   Ready</div>
<div class="t mono" style="left:1px;top:12.07px;font-size:9.7px;letter-spacing:0.495px;line-height:11.27px;text-shadow:0.45px 0 0 currentColor;color:#00ff00">14:08:25.146 Startup      Activating GeneralFluidSystemModule Module</div>
<div class="t mono" style="left:1px;top:23.34px;font-size:9.7px;letter-spacing:0.495px;line-height:11.27px;text-shadow:0.45px 0 0 currentColor;color:#ff0000">14:08:25.146 Startup      ECW Registry (C:\Program Files\Nordson Corporation\ECW175)</div>
<div class="t mono" style="left:1px;top:34.61px;font-size:9.7px;letter-spacing:0.495px;line-height:11.27px;text-shadow:0.45px 0 0 currentColor;color:#00ff00">14:08:25.146 Startup      Windows XP Version 5.1</div>
<div class="t mono" style="left:1px;top:45.88px;font-size:9.7px;letter-spacing:0.495px;line-height:11.27px;text-shadow:0.45px 0 0 currentColor;color:#00ff00">14:08:25.146 Startup      Build 2600 Service Pack 2</div>
<div class="t mono" style="left:1px;top:57.15px;font-size:9.7px;letter-spacing:0.495px;line-height:11.27px;text-shadow:0.45px 0 0 currentColor;color:#00ff00">14:08:25.255 Startup      Activating GeneralModule Module</div>
<div class="t mono" style="left:1px;top:68.42px;font-size:9.7px;letter-spacing:0.495px;line-height:11.27px;text-shadow:0.45px 0 0 currentColor;color:#00ff00">14:08:25.255 Startup      Activating MotionModule Module</div>
<div class="t mono" style="left:1px;top:79.69px;font-size:9.7px;letter-spacing:0.495px;line-height:11.27px;text-shadow:0.45px 0 0 currentColor;color:#00ff00">14:08:25.270 Startup      Activating ControlModule Module</div>
<div class="t mono" style="left:1px;top:90.96px;font-size:9.7px;letter-spacing:0.495px;line-height:11.27px;text-shadow:0.45px 0 0 currentColor;color:#00ff00">14:08:25.535 Startup      ECW Version 0.0.0.201</div>
</div>
<div class="a" style="left:123px;top:481px;width:488px;height:1px;background:#fff"></div>
<!-- scrollbar -->
<div class="a" style="left:598px;top:380px;width:12px;height:101px;background:linear-gradient(90deg,#eeede6,#fbfbf8 40%,#f0efe8)"></div>
<div class="a" style="left:599px;top:381px;width:10px;height:11px;background:linear-gradient(135deg,#dce6fc,#b9cdf8);border:1px solid #c2d2f6;border-radius:1px"></div>
<svg class="a" style="left:600px;top:383px" width="8" height="8"><path d="M1.2 5.5 L4 2.6 L6.8 5.5" stroke="#4d6185" stroke-width="1.5" fill="none"/></svg>
<div class="a" style="left:599px;top:454px;width:10px;height:14px;background:linear-gradient(135deg,#dce6fc,#b9cdf8);border:1px solid #c2d2f6;border-radius:1px"></div>
<div class="a" style="left:602px;top:458px;width:4px;height:1px;background:#8aa4e4"></div>
<div class="a" style="left:602px;top:460px;width:4px;height:1px;background:#8aa4e4"></div>
<div class="a" style="left:602px;top:462px;width:4px;height:1px;background:#8aa4e4"></div>
<div class="a" style="left:599px;top:469px;width:10px;height:12px;background:linear-gradient(135deg,#dce6fc,#b9cdf8);border:1px solid #c2d2f6;border-radius:1px"></div>
<svg class="a" style="left:600px;top:472px" width="8" height="8"><path d="M1.2 2.5 L4 5.4 L6.8 2.5" stroke="#4d6185" stroke-width="1.5" fill="none"/></svg>

<!-- status bar -->
<div class="t" style="left:112px;top:508px;font-size:7.6px;color:#000">Ready</div>
<div class="a" style="left:322px;top:505px;width:1px;height:12px;background:#fff"></div>
<div class="a" style="left:323px;top:505px;width:1px;height:12px;background:#aca899"></div>
<div class="a" style="left:111px;top:517px;width:720px;height:3px;background:linear-gradient(#3d8ff0,#2b7de8)"></div>



</body></html>
